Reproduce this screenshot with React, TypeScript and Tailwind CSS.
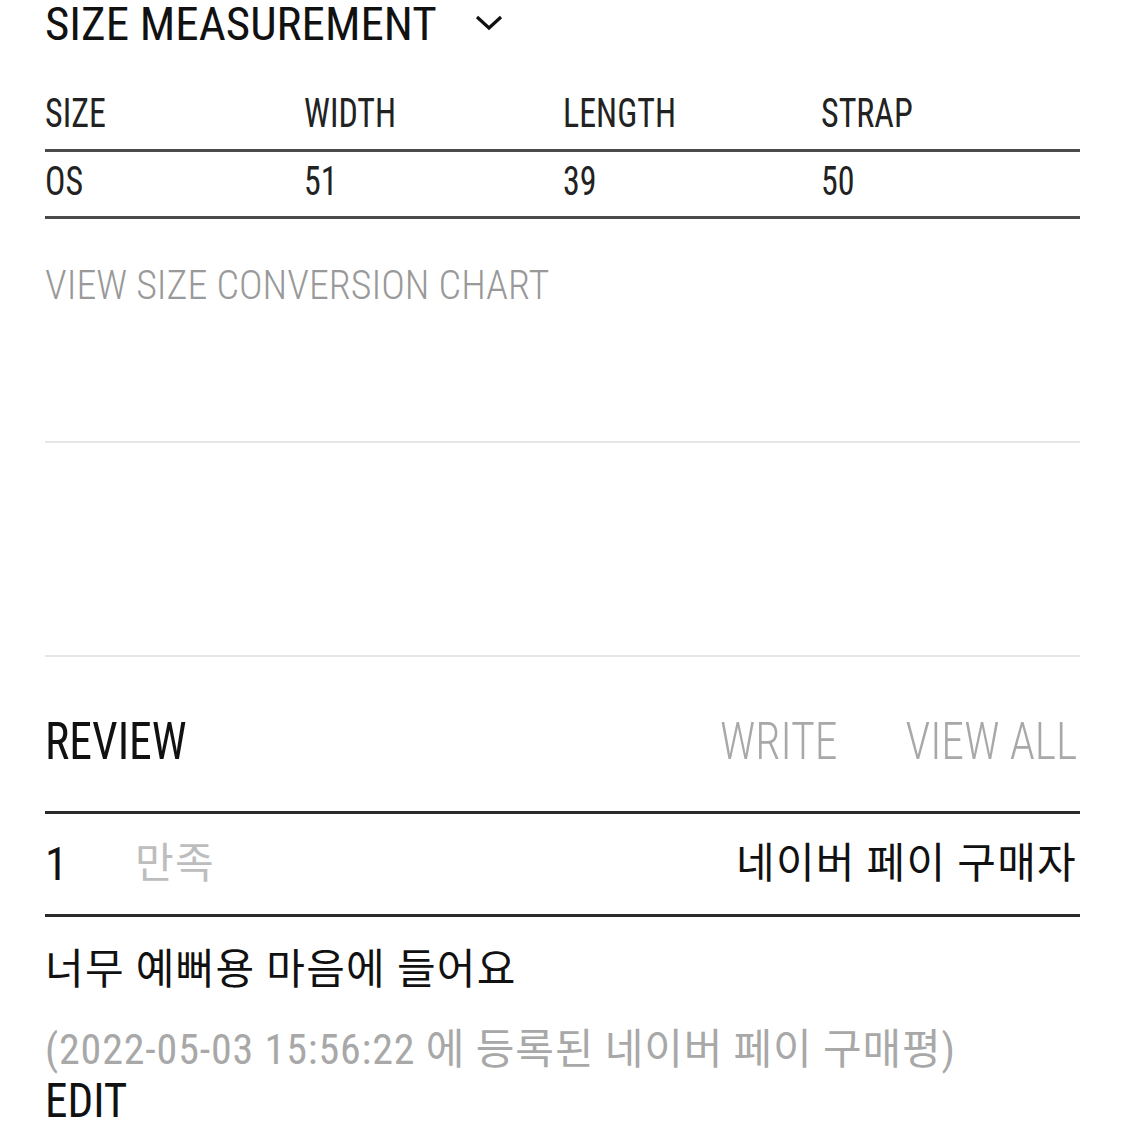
const latin = { fontFamily: "'Roboto Condensed', 'Noto Sans CJK KR', sans-serif" };

const cols = ["SIZE", "WIDTH", "LENGTH", "STRAP"];
const vals = ["OS", "51", "39", "50"];

export default function App() {
  return (
    <div className="min-h-screen bg-white px-[45px] text-[#111]" style={latin}>
      {/* size measurement */}
      <div className="flex items-center">
        <span className="text-[47px] leading-[48px]">SIZE MEASUREMENT</span>
        <svg width="28" height="18" viewBox="0 0 28 18" className="ml-[38px] mt-[-2px]">
          <polyline points="2,3 14,14 26,3" fill="none" stroke="#111" strokeWidth="3.2" />
        </svg>
      </div>

      <div className="grid grid-cols-4 pt-[46px] pb-[15px] border-b-[3px] border-[#4a4a4a] text-[40px] leading-[40px] text-[#222]">
        {cols.map((c) => (
          <div key={c}>
            <span className="inline-block origin-left scale-x-[0.85]">{c}</span>
          </div>
        ))}
      </div>
      <div className="grid grid-cols-4 pt-[10px] pb-[14px] border-b-[3px] border-[#4a4a4a] text-[40px] leading-[40px] text-[#222]">
        {vals.map((v) => (
          <div key={v}>
            <span className="inline-block origin-left scale-x-[0.85]">{v}</span>
          </div>
        ))}
      </div>

      <div className="mt-[46px] text-[40px] leading-[42px] text-[#999] font-light">
        VIEW SIZE CONVERSION CHART
      </div>

      <div className="mt-[134px] h-[216px] border-y-2 border-[#e6e6e6]" />

      {/* review */}
      <div className="mt-[59px] flex items-center justify-between pb-[43px] border-b-[3px] border-[#2a2a2a] text-[52px] leading-[52px]">
        <span className="inline-block origin-left scale-x-[0.88] text-[#111]">REVIEW</span>
        <div className="flex gap-[44px] text-[#a8a8a8] mr-[3px] font-light">
          <span className="inline-block origin-right scale-x-[0.88]">WRITE</span>
          <span className="inline-block origin-right scale-x-[0.88]">VIEW ALL</span>
        </div>
      </div>

      <div className="flex items-center justify-between py-[24px] border-b-[3px] border-[#2a2a2a] text-[42px] leading-[52px]">
        <div className="flex items-center">
          <span className="w-[90px] text-[46px] text-[#111]">1</span>
          <span className="text-[#bdbdbd] tracking-[0.03em]">만족</span>
        </div>
        <span className="text-[#111] tracking-[0.03em] mr-[3px]">네이버 페이 구매자</span>
      </div>

      <div className="pt-[27px] text-[42px] leading-[52px] tracking-[0.03em] text-[#111]">
        너무 예뻐용 마음에 들어요
      </div>
      <div className="mt-[28px] text-[42px] leading-[52px] text-[#a8a8a8] tracking-[0.02em]">
        (2022-05-03 15:56:22 에 등록된 네이버 페이 구매평)
      </div>
      <div className="text-[48px] leading-[50px] text-[#111]">
        <span className="inline-block origin-left scale-x-[0.94]">EDIT</span>
      </div>
    </div>
  );
}
